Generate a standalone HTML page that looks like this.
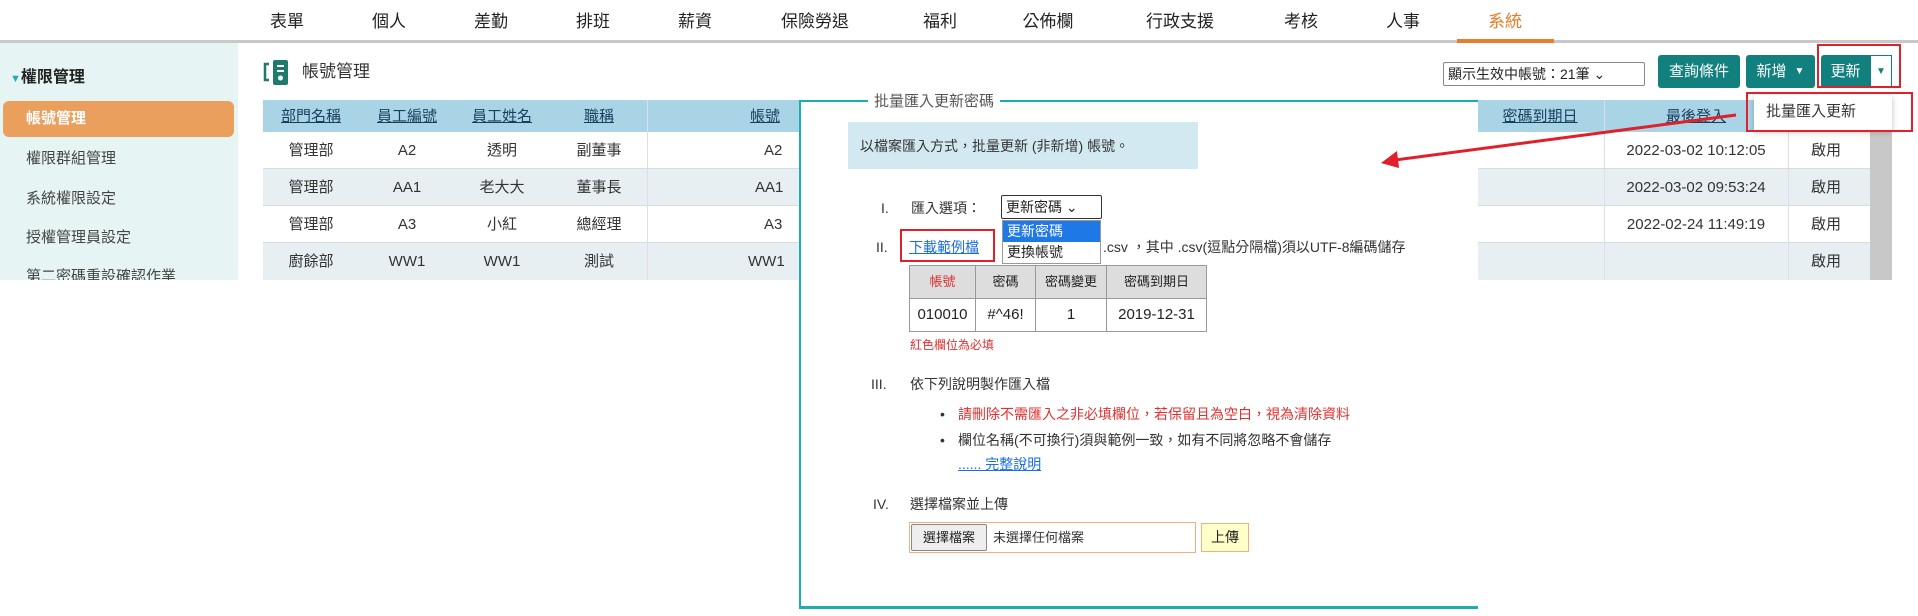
<!DOCTYPE html>
<html><head><meta charset="utf-8">
<style>
*{box-sizing:border-box;margin:0;padding:0}
body{width:1918px;height:616px;position:relative;overflow:hidden;background:#fff;font-family:"Liberation Sans","Noto Sans CJK TC",sans-serif;color:#333}
.a{position:absolute;white-space:nowrap;line-height:20px}
.nav{font-size:17px;color:#222;top:12px;transform:translateX(-50%)}
.tc{transform:translateX(-50%)}
.side{font-size:15px;color:#444;left:26px}
.th{font-size:15px;color:#1a3d5c;text-decoration:underline;top:107px}
.td{font-size:15px;color:#333}
.btn{background:#12807e;color:#fff;font-size:15px;border-radius:3px;display:flex;align-items:center;justify-content:center}
.dlg{font-size:14px;color:#333}
</style></head><body>
<!-- nav -->
<div class="a" style="left:0;top:40px;width:1918px;height:3px;background:#c8c8c8"></div>
<div class="a" style="left:1457px;top:39px;width:97px;height:4px;background:#e87d2a"></div>
<div class="a nav" style="left:287px">表單</div>
<div class="a nav" style="left:389px">個人</div>
<div class="a nav" style="left:491px">差勤</div>
<div class="a nav" style="left:593px">排班</div>
<div class="a nav" style="left:695px">薪資</div>
<div class="a nav" style="left:815px">保險勞退</div>
<div class="a nav" style="left:940px">福利</div>
<div class="a nav" style="left:1048px">公佈欄</div>
<div class="a nav" style="left:1180px">行政支援</div>
<div class="a nav" style="left:1301px">考核</div>
<div class="a nav" style="left:1403px">人事</div>
<div class="a nav" style="left:1505px;color:#e87d2a">系統</div>
<!-- sidebar -->
<div class="a" style="left:0;top:43px;width:238px;height:237px;background:#e6f5f4;overflow:hidden">
<div class="a" style="left:10px;top:25px;font-size:16px;font-weight:bold;color:#222"><span style="color:#2aa8b8;font-size:11px">▼</span>權限管理</div>
<div class="a" style="left:3px;top:58px;width:231px;height:36px;background:#eb9f5c;border-radius:6px;color:#fff;font-size:15px;font-weight:bold;padding:8px 0 0 23px">帳號管理</div>
<div class="a side" style="top:106px">權限群組管理</div>
<div class="a side" style="top:146px">系統權限設定</div>
<div class="a side" style="top:185px">授權管理員設定</div>
<div class="a side" style="top:224px">第二密碼重設確認作業</div>
</div>
<!-- title -->
<svg class="a" style="left:263px;top:58px" width="28" height="28" viewBox="0 0 28 28"><path d="M6 6H2v16h4" fill="none" stroke="#1f7a6e" stroke-width="2.5"/><rect x="10" y="2" width="15" height="25" rx="2" fill="#1f7a6e"/><rect x="14" y="7" width="7" height="2" fill="#fff"/><rect x="14" y="12" width="7" height="2" fill="#fff"/><circle cx="17.5" cy="20" r="2.5" fill="#fff"/></svg>
<div class="a" style="left:302px;top:62px;font-size:17px;color:#333">帳號管理</div>
<!-- right controls -->
<div class="a" style="left:1443px;top:62px;width:202px;height:24px;border:1px solid #888;border-radius:2px;font-size:14px;color:#222;padding:1px 4px">顯示生效中帳號：21筆 ⌄</div>
<div class="a btn" style="left:1658px;top:55px;width:82px;height:33px">查詢條件</div>
<div class="a btn" style="left:1746px;top:55px;width:69px;height:33px">新增 <span style="font-size:10px;margin-left:8px">▼</span></div>
<div class="a btn" style="left:1821px;top:55px;width:49px;height:33px;border-radius:3px 0 0 3px">更新</div>
<div class="a" style="left:1870px;top:55px;width:22px;height:33px;border:1px solid #12807e;background:#fff;color:#12807e;font-size:10px;text-align:center;line-height:31px">▼</div>
<div class="a" style="left:1817px;top:44px;width:84px;height:44px;border:2px solid #e0202a"></div>
<!-- table -->
<div class="a" style="left:263px;top:100px;width:1607px;height:32px;background:#a8d4e6"></div>
<div class="a" style="left:263px;top:168px;width:1607px;height:37px;background:#e8eff2"></div>
<div class="a" style="left:263px;top:242px;width:1607px;height:38px;background:#e8eff2"></div>
<div class="a" style="left:263px;top:168px;width:1607px;height:1px;background:#d4dde2"></div>
<div class="a" style="left:263px;top:205px;width:1607px;height:1px;background:#d4dde2"></div>
<div class="a" style="left:263px;top:242px;width:1607px;height:1px;background:#d4dde2"></div>
<div class="a" style="left:647px;top:100px;width:1px;height:180px;background:#dde"></div>
<div class="a" style="left:1604px;top:100px;width:1px;height:180px;background:#dde"></div>
<div class="a" style="left:1788px;top:100px;width:1px;height:180px;background:#dde"></div>
<div class="a" style="left:1870px;top:130px;width:22px;height:150px;background:#c8c8c8"></div>
<div class="a th tc" style="left:311px">部門名稱</div>
<div class="a th tc" style="left:407px">員工編號</div>
<div class="a th tc" style="left:502px">員工姓名</div>
<div class="a th tc" style="left:599px">職稱</div>
<div class="a th" style="left:750px">帳號</div>
<div class="a th tc" style="left:1540px">密碼到期日</div>
<div class="a th tc" style="left:1696px">最後登入</div>
<div class="a td tc" style="left:311px;top:141px">管理部</div><div class="a td tc" style="left:407px;top:141px">A2</div><div class="a td tc" style="left:502px;top:141px">透明</div><div class="a td tc" style="left:599px;top:141px">副董事</div><div class="a td" style="left:764px;top:141px">A2</div>
<div class="a td tc" style="left:311px;top:178px">管理部</div><div class="a td tc" style="left:407px;top:178px">AA1</div><div class="a td tc" style="left:502px;top:178px">老大大</div><div class="a td tc" style="left:599px;top:178px">董事長</div><div class="a td" style="left:755px;top:178px">AA1</div>
<div class="a td tc" style="left:311px;top:215px">管理部</div><div class="a td tc" style="left:407px;top:215px">A3</div><div class="a td tc" style="left:502px;top:215px">小紅</div><div class="a td tc" style="left:599px;top:215px">總經理</div><div class="a td" style="left:764px;top:215px">A3</div>
<div class="a td tc" style="left:311px;top:252px">廚餘部</div><div class="a td tc" style="left:407px;top:252px">WW1</div><div class="a td tc" style="left:502px;top:252px">WW1</div><div class="a td tc" style="left:599px;top:252px">測試</div><div class="a td" style="left:748px;top:252px">WW1</div>
<div class="a td tc" style="left:1696px;top:141px">2022-03-02 10:12:05</div><div class="a td tc" style="left:1826px;top:141px">啟用</div>
<div class="a td tc" style="left:1696px;top:178px">2022-03-02 09:53:24</div><div class="a td tc" style="left:1826px;top:178px">啟用</div>
<div class="a td tc" style="left:1696px;top:215px">2022-02-24 11:49:19</div><div class="a td tc" style="left:1826px;top:215px">啟用</div>
<div class="a td tc" style="left:1826px;top:252px">啟用</div>
<!-- dropdown menu -->
<div class="a" style="left:1754px;top:95px;width:138px;height:35px;background:#fff;box-shadow:0 2px 6px rgba(0,0,0,.25);font-size:15px;color:#333;padding:7px 0 0 12px">批量匯入更新</div>
<div class="a" style="left:1746px;top:92px;width:167px;height:40px;border:2px solid #e0202a"></div>
<!-- dialog -->
<div class="a" style="left:799px;top:100px;width:679px;height:509px;background:#fff;border-left:2px solid #1aaeb0;border-top:2px solid #1aaeb0;border-bottom:3px solid #1aaeb0"></div>
<div class="a" style="left:868px;top:92px;background:#fff;padding:0 6px;font-size:15px;color:#555">批量匯入更新密碼</div>
<div class="a" style="left:848px;top:122px;width:350px;height:47px;background:#d3e9f2"></div>
<div class="a dlg" style="left:860px;top:136px">以檔案匯入方式，批量更新 (非新增) 帳號。</div>
<div class="a dlg" style="left:881px;top:198px">I.</div>
<div class="a dlg" style="left:911px;top:198px">匯入選項：</div>
<div class="a" style="left:1001px;top:195px;width:101px;height:24px;border:1px solid #333;border-radius:2px;font-size:14px;padding:1px 4px;color:#222">更新密碼 ⌄</div>
<div class="a" style="left:1002px;top:220px;width:99px;height:44px;background:#fff;border:1px solid #999;font-size:14px;color:#222">
<div style="background:#1e78e6;color:#fff;height:21px;padding:0 4px">更新密碼</div><div style="padding:0 4px">更換帳號</div></div>
<div class="a dlg" style="left:876px;top:237px">II.</div>
<div class="a" style="left:900px;top:229px;width:95px;height:33px;border:2px solid #e0202a"></div>
<div class="a dlg" style="left:909px;top:237px;color:#1a6ee0;text-decoration:underline">下載範例檔</div>
<div class="a dlg" style="left:1103px;top:237px">.csv ，其中 .csv(逗點分隔檔)須以UTF-8編碼儲存</div>
<table class="a" style="left:909px;top:265px;border-collapse:collapse;font-size:13px;color:#222">
<tr style="background:#ddd;height:33px"><td style="border:1px solid #999;width:66px;text-align:center;color:#e03030">帳號</td><td style="border:1px solid #999;width:60px;text-align:center">密碼</td><td style="border:1px solid #999;width:71px;text-align:center">密碼變更</td><td style="border:1px solid #999;width:100px;text-align:center">密碼到期日</td></tr>
<tr style="height:33px;font-size:15px"><td style="border:1px solid #999;text-align:center">010010</td><td style="border:1px solid #999;text-align:center">#^46!</td><td style="border:1px solid #999;text-align:center">1</td><td style="border:1px solid #999;text-align:center">2019-12-31</td></tr></table>
<div class="a" style="left:910px;top:335px;font-size:12px;color:#e03030">紅色欄位為必填</div>
<div class="a dlg" style="left:871px;top:374px">III.</div>
<div class="a dlg" style="left:910px;top:374px">依下列說明製作匯入檔</div>
<div class="a dlg" style="left:940px;top:404px">•</div>
<div class="a dlg" style="left:958px;top:404px;color:#e03030">請刪除不需匯入之非必填欄位，若保留且為空白，視為清除資料</div>
<div class="a dlg" style="left:940px;top:430px">•</div>
<div class="a dlg" style="left:958px;top:430px">欄位名稱(不可換行)須與範例一致，如有不同將忽略不會儲存</div>
<div class="a dlg" style="left:958px;top:454px;color:#1a6ee0;text-decoration:underline">...... 完整說明</div>
<div class="a dlg" style="left:873px;top:494px">IV.</div>
<div class="a dlg" style="left:910px;top:494px">選擇檔案並上傳</div>
<div class="a" style="left:909px;top:522px;width:287px;height:31px;border:1px solid #f0b080"></div>
<div class="a" style="left:911px;top:524px;width:76px;height:27px;background:#eee;border:1px solid #888;border-radius:2px;font-size:13px;color:#222;text-align:center;line-height:25px">選擇檔案</div>
<div class="a" style="left:993px;top:528px;font-size:13px;color:#333">未選擇任何檔案</div>
<div class="a" style="left:1201px;top:523px;width:48px;height:29px;background:#ffffc8;border:1px solid #f0b080;font-size:14px;text-align:center;line-height:27px;color:#222">上傳</div>
<!-- arrow -->
<svg class="a" style="left:0;top:0" width="1918" height="616"><line x1="1736" y1="115" x2="1395" y2="160" stroke="#e0202a" stroke-width="3"/><polygon points="1381,163 1397,151 1399,168" fill="#e0202a"/></svg>
</body></html>
